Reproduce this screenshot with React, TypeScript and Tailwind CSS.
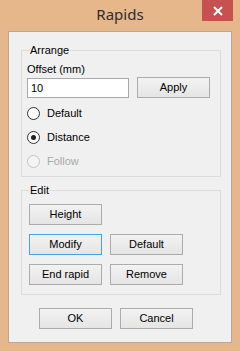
import * as React from 'react';

function Btn({ label, focused = false }: { label: string; focused?: boolean }) {
    return (
        <div
            className={
                'flex h-[21px] w-[73px] items-center justify-center border bg-gradient-to-b from-[#f2f2f2] to-[#e5e5e5] text-[11px] leading-[13px] text-black ' +
                (focused ? 'border-[#4aa0e8]' : 'border-[#acacac]')
            }
        >
            {label}
        </div>
    );
}

function Radio({ label, checked = false, disabled = false }: { label: string; checked?: boolean; disabled?: boolean }) {
    return (
        <div className="flex items-center gap-[7px]">
            <div
                className={
                    'flex h-[13px] w-[13px] items-center justify-center rounded-full border ' +
                    (disabled ? 'border-[#c4c4c4] bg-[#f4f4f4]' : 'border-[#333333] bg-white')
                }
            >
                {checked && <div className="h-[5px] w-[5px] rounded-full bg-[#222222]" />}
            </div>
            <span className={disabled ? 'text-[#a8a8a8]' : 'text-black'}>{label}</span>
        </div>
    );
}

function Group({ title, className, children }: { title: string; className: string; children: React.ReactNode }) {
    return (
        <div className={'relative w-[200px] border border-[#dcdcdc] ' + className}>
            <span className="absolute left-[7px] top-[-7px] bg-[#f0f0f0] px-[1px] leading-[13px] text-black">
                {title}
            </span>
            {children}
        </div>
    );
}

export default function App() {
    return (
        <div
            className="h-[351px] w-[240px] bg-[#e6b78b] text-[11px]"
            style={{ fontFamily: '"Liberation Sans", Arial, sans-serif' }}
        >
            {/* title bar */}
            <div className="relative h-[31px]">
                <div
                    className="pt-[4px] text-center text-[15px] leading-[20px] text-[#2e2e2e]"
                    style={{ fontFamily: '"Noto Sans", "Open Sans", sans-serif' }}
                >
                    Rapids
                </div>
                <div className="absolute right-[7px] top-0 flex h-[21px] w-[31px] items-center justify-center bg-[#c75050]">
                    <svg width="10" height="10" viewBox="0 0 10 10">
                        <path d="M1 1 L9 9 M9 1 L1 9" stroke="#ffffff" strokeWidth="2" />
                    </svg>
                </div>
            </div>

            {/* client area */}
            <div className="mx-[8px] h-[312px] border border-[#b9a898] bg-[#f0f0f0]">
                <Group title="Arrange" className="ml-[12px] mt-[18px] h-[127px]">
                    <div className="pl-[5px]">
                        <div className="mt-[12px] leading-[13px] text-black">Offset (mm)</div>
                        <div className="mt-[1px] flex gap-[8px]">
                            <div className="mt-[1px] flex h-[20px] w-[102px] items-center border border-[#a9a9a9] bg-white pl-[3px] text-black">
                                10
                            </div>
                            <Btn label="Apply" />
                        </div>
                        <div className="mt-[4px] flex h-[23px] items-center">
                            <Radio label="Default" />
                        </div>
                        <div className="flex h-[24px] items-center">
                            <Radio label="Distance" checked />
                        </div>
                        <div className="flex h-[24px] items-center">
                            <Radio label="Follow" disabled />
                        </div>
                    </div>
                </Group>

                <Group title="Edit" className="ml-[12px] mt-[13px] h-[105px]">
                    <div className="flex flex-col gap-[9px] pl-[7px] pt-[13px]">
                        <div className="flex gap-[8px]">
                            <Btn label="Height" />
                        </div>
                        <div className="flex gap-[8px]">
                            <Btn label="Modify" focused />
                            <Btn label="Default" />
                        </div>
                        <div className="flex gap-[8px]">
                            <Btn label="End rapid" />
                            <Btn label="Remove" />
                        </div>
                    </div>
                </Group>

                <div className="ml-[30px] mt-[13px] flex gap-[8px]">
                    <Btn label="OK" />
                    <Btn label="Cancel" />
                </div>
            </div>
        </div>
    );
}
